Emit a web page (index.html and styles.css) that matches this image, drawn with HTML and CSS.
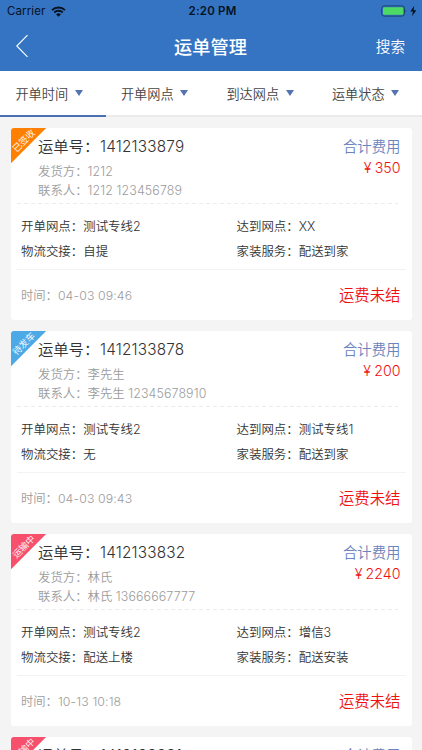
FILE: index.html
```html
<!DOCTYPE html>
<html lang="zh-CN">
<head>
    <meta charset="UTF-8">
    <meta name="viewport" content="width=device-width, initial-scale=1.0">
    <title>运单管理</title>
    <link rel="stylesheet" href="styles.css">
</head>

<body>
    <header class="top">
        <div class="status">
            <div class="carrier">
                <span>Carrier</span>
                <svg class="wifi" width="15" height="11" viewBox="0 0 15 11">
                    <path d="M1 4.1a9.4 9.4 0 0 1 13 0M3.3 6.5a6.1 6.1 0 0 1 8.4 0" fill="none" stroke="#06121f" stroke-width="2"/>
                    <path d="M7.5 10.8L5.1 8.4a3.5 3.5 0 0 1 4.8 0z" fill="#06121f"/>
                </svg>
            </div>
            <div class="clock">2:20 PM</div>
            <svg class="battery" width="37" height="12" viewBox="0 0 37 12">
                <rect x=".7" y=".9" width="22.8" height="10.2" rx="2.5" fill="none" stroke="#1c4272" stroke-width="1"/>
                <rect x="2" y="2.2" width="20.2" height="7.6" rx="1.3" fill="#4cd964"/>
                <path d="M24.7 4.3q1.4 1.6 0 3.4z" fill="#1c4272"/>
                <path d="M33.2.8L29.3 6.6h2.7l-1 4.6 4.4-6h-2.8z" fill="#06121f"/>
            </svg>
        </div>
        <div class="nav">
            <svg class="back" width="13" height="24" viewBox="0 0 13 24">
                <path d="M11.5 1.2L.8 12l10.7 10.8" fill="none" stroke="#fff" stroke-width="1.1"/>
            </svg>
            <h1>运单管理</h1>
            <span class="search">搜索</span>
        </div>
    </header>

    <div class="tabs">
        <div class="tab active">开单时间<i class="arrow"></i></div>
        <div class="tab">开单网点<i class="arrow"></i></div>
        <div class="tab">到达网点<i class="arrow"></i></div>
        <div class="tab">运单状态<i class="arrow"></i></div>
    </div>

    <div class="list">
        <div class="card">
            <div class="ribbon orange"><span>已签收</span></div>
            <div class="head">
                <div>
                    <h2>运单号：<span class="no">1412133879</span></h2>
                    <p>发货方：<span class="num">1212</span></p>
                    <p>联系人：<span class="num">1212 123456789</span></p>
                </div>
                <div class="fee">
                    <div class="fee-name">合计费用</div>
                    <div class="price">¥ 350</div>
                </div>
            </div>
            <div class="info">
                <p>开单网点：测试专线2</p><p>达到网点：XX</p>
                <p>物流交接：自提</p><p>家装服务：配送到家</p>
            </div>
            <div class="foot">
                <span class="time">时间：<span class="num">04-03 09:46</span></span>
                <span class="unpaid">运费未结</span>
            </div>
        </div>

        <div class="card">
            <div class="ribbon blue"><span>待发车</span></div>
            <div class="head">
                <div>
                    <h2>运单号：<span class="no">1412133878</span></h2>
                    <p>发货方：李先生</p>
                    <p>联系人：李先生 <span class="num">12345678910</span></p>
                </div>
                <div class="fee">
                    <div class="fee-name">合计费用</div>
                    <div class="price">¥ 200</div>
                </div>
            </div>
            <div class="info">
                <p>开单网点：测试专线2</p><p>达到网点：测试专线1</p>
                <p>物流交接：无</p><p>家装服务：配送到家</p>
            </div>
            <div class="foot">
                <span class="time">时间：<span class="num">04-03 09:43</span></span>
                <span class="unpaid">运费未结</span>
            </div>
        </div>

        <div class="card">
            <div class="ribbon red"><span>运输中</span></div>
            <div class="head">
                <div>
                    <h2>运单号：<span class="no">1412133832</span></h2>
                    <p>发货方：林氏</p>
                    <p>联系人：林氏 <span class="num">13666667777</span></p>
                </div>
                <div class="fee">
                    <div class="fee-name">合计费用</div>
                    <div class="price">¥ 2240</div>
                </div>
            </div>
            <div class="info">
                <p>开单网点：测试专线2</p><p>达到网点：增信3</p>
                <p>物流交接：配送上楼</p><p>家装服务：配送安装</p>
            </div>
            <div class="foot">
                <span class="time">时间：<span class="num">10-13 10:18</span></span>
                <span class="unpaid">运费未结</span>
            </div>
        </div>

        <div class="card">
            <div class="ribbon red"><span>运输中</span></div>
            <div class="head">
                <div>
                    <h2>运单号：<span class="no">1412133831</span></h2>
                </div>
                <div class="fee">
                    <div class="fee-name">合计费用</div>
                </div>
            </div>
        </div>
    </div>
</body>
</html>
```
FILE: styles.css
```css
*{
    box-sizing: border-box;
    margin: 0;
    padding: 0;
}
body{
    height: 750px;
    overflow: hidden;
    display: flex;
    flex-direction: column;
    background: #f4f4f4;
    color: #333;
    font-family: Inter, "Noto Sans CJK SC", sans-serif;
    font-weight: 350;
}
.top{
    height: 71px;
    flex: none;
    background: #3574c3;
    color: #fff;
}
.status{
    display: grid;
    grid-template-columns: 1fr auto 1fr;
    align-items: center;
    height: 22px;
    padding: 0 4px 0 7px;
    color: #06121f;
    font-size: 11.5px;
    font-weight: 400;
}
.carrier{
    display: flex;
    align-items: center;
    gap: 6px;
    letter-spacing: .1px;
}
.clock{
    font-weight: 600;
    letter-spacing: .2px;
}
.battery{
    justify-self: end;
}
.nav{
    display: grid;
    grid-template-columns: 1fr auto 1fr;
    align-items: center;
    height: 48px;
    padding: 0 17px 1px 16px;
}
.nav h1{
    font-size: 18.2px;
    font-weight: 500;
}
.search{
    justify-self: end;
    font-size: 14.6px;
}
.tabs{
    display: grid;
    grid-template-columns: repeat(4, 1fr);
    flex: none;
    height: 46px;
    background: #fff;
}
.tab{
    display: flex;
    align-items: center;
    justify-content: center;
    gap: 6.5px;
    padding-right: 7.5px;
    border-bottom: 2px solid #ebebeb;
    color: #444;
    font-size: 13.2px;
}
.tab.active{
    border-color: #4a70b2;
}
.arrow{
    border: 4.5px solid transparent;
    border-top: 6px solid #5573b0;
    border-bottom: 0;
}
.list{
    display: flex;
    flex-direction: column;
    gap: 10.7px;
    padding: 10.7px 10.5px 0;
}
.card{
    position: relative;
    flex: none;
    height: 192.3px;
    padding: 0 6px;
    background: #fff;
    border-radius: 3px;
    overflow: hidden;
}
.ribbon{
    position: absolute;
    top: 0;
    left: 0;
    width: 36px;
    height: 36px;
    clip-path: polygon(0 0, 100% 0, 0 100%);
    color: #fff;
}
.ribbon span{
    position: absolute;
    top: 7px;
    left: -6px;
    width: 38px;
    text-align: center;
    font-size: 9.2px;
    line-height: 12px;
    transform: rotate(-45deg);
}
.orange{
    background: #ff8000;
}
.blue{
    background: #4da9e6;
}
.red{
    background: #f7506c;
}
.head{
    display: flex;
    justify-content: space-between;
    height: 76px;
    padding: 9px 5px 0 21.5px;
    /* dashed divider under the sender block */
    background: repeating-linear-gradient(90deg, #ececec 0 4px, #fff 4px 7px) 0 100% / calc(100% - 8px) 1px no-repeat;
}
.head h2{
    height: 25px;
    font-size: 15.3px;
    font-weight: 350;
    line-height: 20px;
}
.no{
    letter-spacing: .2px;
    margin-left: .8px;
}
.num{
    letter-spacing: .12px;
}
.head p{
    color: #9c9c9c;
    font-size: 12.4px;
    line-height: 19px;
}
.fee{
    text-align: right;
}
.fee-name{
    color: #6a84bd;
    font-size: 14.4px;
    line-height: 20px;
}
.price{
    color: #f01010;
    font-size: 14.2px;
    line-height: 22px;
    word-spacing: -.7px;
}
.info{
    display: grid;
    grid-template-columns: 215.5px auto;
    height: 66px;
    padding: 10.5px 0 0 4.5px;
    border-bottom: 1px solid #f3f3f3;
    align-content: start;
    font-size: 12.45px;
    line-height: 25px;
}
.foot{
    display: flex;
    align-items: center;
    justify-content: space-between;
    height: 50px;
    padding: 0 5px 0 4.5px;
}
.time{
    color: #9c9c9c;
    font-size: 12.3px;
}
.unpaid{
    padding-bottom: 1px;
    color: #f01010;
    font-size: 15.4px;
}
```
